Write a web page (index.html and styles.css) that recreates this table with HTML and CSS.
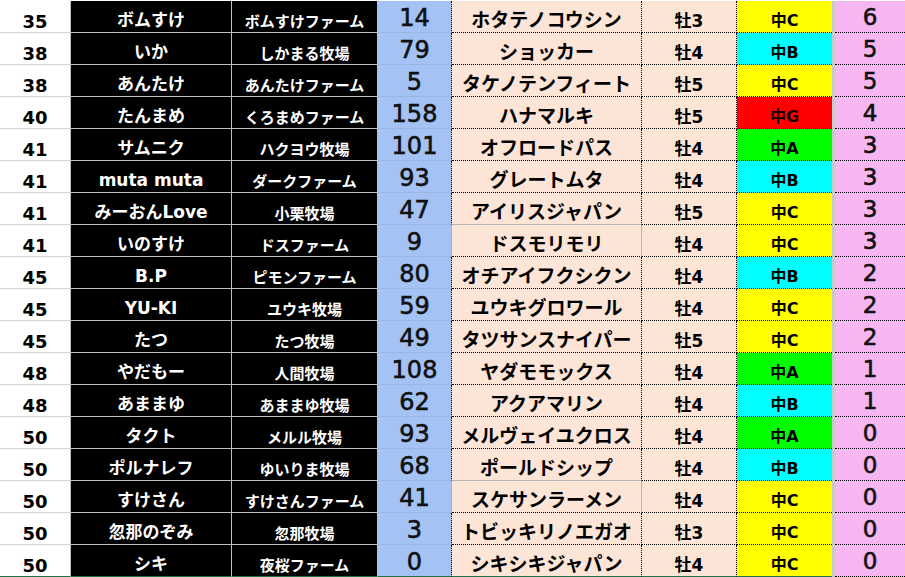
FILE: index.html
```html
<!DOCTYPE html>
<html lang="ja">
<head>
<meta charset="utf-8">
<title>Ranking</title>
<link rel="stylesheet" href="styles.css">
</head>
<body>
<div class="sheet" id="sheet"></div>
<script src="app.js"></script>
</body>
</html>
```
FILE: app.js
```js
var rows = [
  ["35","ボムすけ","ボムすけファーム","14","ホタテノコウシン","牡3","中C","y","6"],
  ["38","いか","しかまる牧場","79","ショッカー","牡4","中B","c","5"],
  ["38","あんたけ","あんたけファーム","5","タケノテンフィート","牡5","中C","y","5"],
  ["40","たんまめ","くろまめファーム","158","ハナマルキ","牡5","中G","r","4"],
  ["41","サムニク","ハクヨウ牧場","101","オフロードパス","牡4","中A","g","3"],
  ["41","muta muta","ダークファーム","93","グレートムタ","牡4","中B","c","3"],
  ["41","みーおんLove","小栗牧場","47","アイリスジャパン","牡5","中C","y","3"],
  ["41","いのすけ","ドスファーム","9","ドスモリモリ","牡4","中C","y","3"],
  ["45","B.P","ピモンファーム","80","オチアイフクシクン","牡4","中B","c","2"],
  ["45","YU-KI","ユウキ牧場","59","ユウキグロワール","牡4","中C","y","2"],
  ["45","たつ","たつ牧場","49","タツサンスナイパー","牡5","中C","y","2"],
  ["48","やだもー","人間牧場","108","ヤダモモックス","牡4","中A","g","1"],
  ["48","あままゆ","あままゆ牧場","62","アクアマリン","牡4","中B","c","1"],
  ["50","タクト","メルル牧場","93","メルヴェイユクロス","牡4","中A","g","0"],
  ["50","ポルナレフ","ゆいりま牧場","68","ポールドシップ","牡4","中B","c","0"],
  ["50","すけさん","すけさんファーム","41","スケサンラーメン","牡4","中C","y","0"],
  ["50","忽那のぞみ","忽那牧場","3","トビッキリノエガオ","牡3","中C","y","0"],
  ["50","シキ","夜桜ファーム","0","シキシキジャパン","牡4","中C","y","0"]
];
var plain = {6: "above", 7: "self", 14: "above", 15: "self"};
var sheet = document.getElementById("sheet");
rows.forEach(function (r, i) {
  var row = document.createElement("div");
  row.className = "row";
  function cell(cls, text) {
    var d = document.createElement("div");
    d.className = "cell " + cls;
    var s = document.createElement("span");
    s.textContent = text;
    d.appendChild(s);
    row.appendChild(d);
    return d;
  }
  cell("rank", r[0]);
  cell("name", r[1]);
  cell("farm", r[2]);
  var pts = cell("pts", r[3]);
  var horse = cell("horse", r[4]);
  cell("sex", r[5]);
  cell("dist bg-" + r[7], r[6]);
  var sep = document.createElement("div");
  sep.className = "sep";
  row.appendChild(sep);
  cell("win", r[8]);
  if (plain[i] === "self") { horse.classList.add("plain"); pts.classList.add("plainr"); }
  if (plain[i] === "above") { horse.classList.add("plainb"); }
  sheet.appendChild(row);
});
```
FILE: styles.css
```css
html, body {
  margin: 0;
  padding: 0;
  background: #ffffff;
}
.sheet {
  width: 905px;
  height: 577px;
  padding-top: 1px;
  box-sizing: border-box;
  overflow: hidden;
  font-family: "DejaVu Sans", "Noto Sans CJK JP", sans-serif;
}
.row {
  display: grid;
  grid-template-columns: 71px 161px 146px 74px 190px 95px 95px 3px 70px;
  height: 32px;
}
.cell {
  box-sizing: border-box;
  display: flex;
  justify-content: center;
  align-items: flex-end;
  border-right: 1px solid #c6c6c6;
  border-bottom: 1px solid #d4d4d4;
  line-height: 1;
  white-space: nowrap;
}
.rank {
  background: #ffffff;
  color: #000;
  font-weight: 700;
  font-size: 18px;
  padding-bottom: 1px;
  border-right-color: #bdbdbd;
}
.name, .farm {
  background: #000000;
  color: #ffffff;
  font-weight: 700;
  border-right-color: #c0c0c0;
  border-bottom-color: #c0c0c0;
}
.name {
  font-size: 17px;
  padding-bottom: 3px;
}
.farm {
  font-size: 15px;
  padding-bottom: 2px;
}
.pts {
  background: #a4c2f4;
  color: #111;
  font-size: 24px;
  padding-bottom: 2px;
  -webkit-text-stroke: 0.6px #111;
  border-right: 1px dotted #000;
  border-bottom-color: #9fb6de;
}
.pts.plainr {
  border-right: 1px solid #b0b0b0;
}
.horse {
  background: #fce4d6;
  color: #000;
  font-weight: 700;
  font-size: 19px;
  padding-bottom: 2px;
  border-right: 1px dotted #000;
  border-bottom: 1px dotted #000;
}
.horse.plain {
  border-right: 1px solid #b8b8b8;
}
.horse.plainb {
  border-bottom: 1px solid #b8b8b8;
}
.sex {
  background: #fce4d6;
  color: #000;
  font-weight: 700;
  font-size: 17px;
  padding-bottom: 2px;
  border-right: 1px dotted #000;
  border-bottom: 1px dotted #000;
}
.dist {
  color: #000;
  font-weight: 700;
  font-size: 16px;
  padding-bottom: 3px;
  border-right: none;
  border-bottom: 1px dotted #000;
}
.bg-y { background: #ffff00; }
.bg-c { background: #00ffff; }
.bg-r { background: #ff0000; color: #1a0000; }
.bg-g { background: #00ff00; }
.sep {
  background: #c8c8c8;
}
.win {
  background: #f5b6f1;
  color: #111;
  font-size: 23px;
  padding-bottom: 3px;
  -webkit-text-stroke: 0.6px #111;
  border-right: none;
  border-bottom: 1px dotted #000;
}
.row:last-child .rank,
.row:last-child .name,
.row:last-child .farm,
.row:last-child .pts,
.row:last-child .horse,
.row:last-child .sex,
.row:last-child .dist {
  border-bottom: 1px solid #217346;
}
```
